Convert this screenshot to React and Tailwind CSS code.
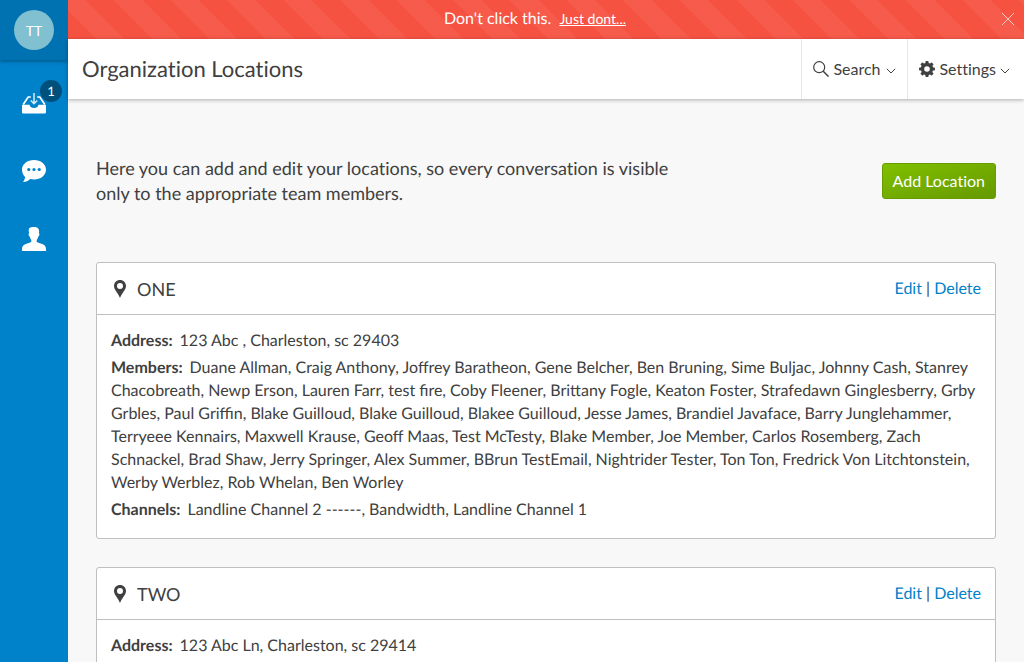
import React from "react";

const locations = [
  {
    name: "ONE",
    address: "123 Abc , Charleston, sc 29403",
    members:
      "Duane Allman, Craig Anthony, Joffrey Baratheon, Gene Belcher, Ben Bruning, Sime Buljac, Johnny Cash, Stanrey Chacobreath, Newp Erson, Lauren Farr, test fire, Coby Fleener, Brittany Fogle, Keaton Foster, Strafedawn Ginglesberry, Grby Grbles, Paul Griffin, Blake Guilloud, Blake Guilloud, Blakee Guilloud, Jesse James, Brandiel Javaface, Barry Junglehammer, Terryeee Kennairs, Maxwell Krause, Geoff Maas, Test McTesty, Blake Member, Joe Member, Carlos Rosemberg, Zach Schnackel, Brad Shaw, Jerry Springer, Alex Summer, BBrun TestEmail, Nightrider Tester, Ton Ton, Fredrick Von Litchtonstein, Werby Werblez, Rob Whelan, Ben Worley",
    channels: "Landline Channel 2 ------, Bandwidth, Landline Channel 1",
  },
  { name: "TWO", address: "123 Abc Ln, Charleston, sc 29414" },
];

function InboxIcon() {
  return (
    <svg className="h-6 w-6" viewBox="0 0 24 24" fill="none" aria-hidden="true">
      <path d="M.8 13.700h6.700c.6 2.300 2 3.300 4.500 3.300s3.900-1 4.500-3.300h6.700a.8.8 0 0 1 .8.800v6.700a1.300 1.300 0 0 1-1.300 1.300H1.300A1.300 1.300 0 0 1 0 21.200v-6.700a.8.8 0 0 1 .8-.8z" fill="#fff" />
      <path d="M1.200 13.500 6.200 6h2.600M22.800 13.500 17.800 6h-2.600" stroke="#fff" strokeWidth="1.700" />
      <path d="M12 2v10.500M8.800 9.500l3.200 3.200 3.200-3.200" stroke="#fff" strokeOpacity=".85" strokeWidth="1.500" />
    </svg>
  );
}

function ChatIcon() {
  return (
    <svg className="h-6 w-6" viewBox="0 0 24 24" aria-hidden="true">
      <path d="M12 1c6.700 0 12 4.200 12 9.700s-5.300 9.800-12 9.800c-1.300 0-2.600-.2-3.800-.5C6.300 21.800 4 23 1 23c1.300-1.500 2-3.200 2.100-5C1.200 16.100 0 13.600 0 10.700 0 5.200 5.300 1 12 1z" fill="#fff" />
      <g fill="#0082ca">
        <circle cx="6.800" cy="10.500" r="1.600" />
        <circle cx="12" cy="10.500" r="1.600" />
        <circle cx="17.200" cy="10.500" r="1.600" />
      </g>
    </svg>
  );
}

function PersonIcon() {
  return (
    <svg className="h-6 w-6" viewBox="0 0 24 24" fill="#fff" aria-hidden="true">
      <path d="M7.200 1.200C8.500.2 10.300 0 12 0c2.900 0 5.100 1.200 5.100 4.300 0 .7-.1 1.300-.2 2 .6.200.6 1.200.3 2-.2.700-.5 1.200-.9 1.300-.3 1.500-.9 2.600-1.600 3.500v1.700c1.300 1 3.500 1.400 5.500 2.200 2.300.9 3.800 2.200 3.800 5.200V24H0v-1.800c0-3 1.500-4.300 3.800-5.200 2-.8 4.200-1.200 5.500-2.200v-1.700c-.7-.9-1.300-2-1.600-3.500-.4-.1-.7-.6-.9-1.300-.3-.8-.3-1.800.3-2-.4-2.100-.6-4 .1-5.100z" />
    </svg>
  );
}

function SearchIcon() {
  return (
    <svg className="h-4 w-4" viewBox="0 0 16 16" fill="none" stroke="#404040" aria-hidden="true">
      <circle cx="6.200" cy="6.200" r="5.500" strokeWidth="1.200" />
      <path d="m10.200 10.200 5.400 5.400" strokeWidth="1.500" />
    </svg>
  );
}

const teeth = [0, 45, 90, 135, 180, 225, 270, 315];

function GearIcon() {
  return (
    <svg className="h-4 w-4" viewBox="0 0 16 16" fill="#404040" aria-hidden="true">
      <circle cx="8" cy="8" r="4.500" fill="none" stroke="#404040" strokeWidth="3.400" />
      {teeth.map((a) => (
        <path key={a} d="M6.400 3V.800Q6.400 0 7.200 0h1.600q.8 0 .8.800V3z" transform={`rotate(${a} 8 8)`} />
      ))}
    </svg>
  );
}

function Chevron() {
  return (
    <svg className="mt-1 h-2 w-2.5" viewBox="0 0 10 8" fill="none" stroke="#404040" aria-hidden="true">
      <path d="M.8 1.800 5 6l4.200-4.200" />
    </svg>
  );
}

function PinIcon() {
  return (
    <svg className="h-[18px] w-3" viewBox="0 0 12 18" fill="#404040" aria-hidden="true">
      <path fillRule="evenodd" d="M6 0c3.400 0 6 2.600 6 6 0 3.600-3.700 6.600-6 12C3.700 12.600 0 9.600 0 6c0-3.400 2.600-6 6-6zm0 3a3 3 0 1 0 0 6 3 3 0 0 0 0-6z" />
    </svg>
  );
}

function Field({ label, children }) {
  return (
    <div className="leading-[23px] [font-variant-ligatures:normal]">
      <dt className="mr-[7px] inline font-bold">{label}:</dt>
      <dd className="inline">{children}</dd>
    </div>
  );
}

function LocationCard({ location }) {
  return (
    <section className="rounded-[3px] border border-[#bfbfbf] bg-white">
      <header className="flex h-[52px] items-center border-b border-[#bfbfbf] pr-3.5 pl-[17px]">
        <PinIcon />
        <h2 className="ml-[11px] flex-1 text-lg">{location.name}</h2>
        <div>
          <a href="#edit" className="text-[#0082ca]">Edit</a> |{" "}
          <a href="#delete" className="text-[#0082ca]">Delete</a>
        </div>
      </header>
      <dl className="flex flex-col gap-1 px-3.5 pt-3.5 pb-[17px]">
        <Field label="Address">{location.address}</Field>
        {location.members && <Field label="Members">{location.members}</Field>}
        {location.channels && <Field label="Channels">{location.channels}</Field>}
      </dl>
    </section>
  );
}

export default function App() {
  return (
    <div className="flex h-screen overflow-hidden bg-[#f8f8f8] font-[Lato,sans-serif] text-base text-[#404040] antialiased [font-variant-ligatures:none] [text-rendering:geometricPrecision]">
      <nav className="flex w-[68px] shrink-0 flex-col items-center bg-[#0082ca]" aria-label="Main">
        <div className="flex h-[60px] w-full items-center justify-center bg-[#0072b1] shadow-[0_1px_4px_rgba(0,0,0,0.4)]">
          <button className="h-10 w-10 rounded-full bg-[#80c0d0] pt-0.5 text-sm text-white">TT</button>
        </div>
        <div className="flex flex-col gap-11 pt-[31px]">
          <a href="#inbox" className="relative" aria-label="Inbox">
            <InboxIcon />
            <span className="absolute -top-[11px] left-[18px] flex h-[22px] w-[22px] items-center justify-center rounded-full bg-[#00507c] pt-px text-[13px] text-white">1</span>
          </a>
          <a href="#conversations" aria-label="Conversations"><ChatIcon /></a>
          <a href="#contacts" aria-label="Contacts"><PersonIcon /></a>
        </div>
      </nav>

      <div className="flex min-w-0 flex-1 flex-col">
        <div className="flex h-[39px] shrink-0 items-center bg-[#f55242] bg-[repeating-linear-gradient(45deg,transparent_0_20px,rgba(255,255,255,0.05)_20px_40px)] pb-px text-white">
          <p className="flex-1 text-center">
            Don&apos;t click this. <a href="#details" className="ml-1 text-sm underline">Just dont...</a>
          </p>
          <button className="mr-2.5" aria-label="Dismiss">
            <svg className="h-3 w-3" viewBox="0 0 12 12" stroke="#fff" strokeOpacity=".7" aria-hidden="true">
              <path d="m0 0 12 12M12 0 0 12" />
            </svg>
          </button>
        </div>

        <header className="z-10 flex h-[60px] shrink-0 items-stretch bg-white shadow-[0_1px_4px_rgba(0,0,0,0.3)]">
          <h1 className="flex flex-1 items-center pb-0.5 pl-3.5 text-[22px]">Organization Locations</h1>
          <button className="flex items-center gap-1 border-l border-[#e8e8e8] px-[11px]">
            <SearchIcon /> <span className="pr-0.5">Search</span> <Chevron />
          </button>
          <button className="flex items-center gap-1 border-l border-[#e8e8e8] pr-3.5 pl-[11px]">
            <GearIcon /> Settings <Chevron />
          </button>
        </header>

        <main className="min-h-0 flex-1 overflow-hidden px-7 pt-[57px]">
          <div className="mb-14 flex items-start justify-between">
            <p className="max-w-[600px] text-lg leading-[25px]">
              Here you can add and edit your locations, so every conversation is visible only to the appropriate team members.
            </p>
            <button className="mt-[7px] h-9 rounded-[3px] border border-[#669c00] bg-linear-to-br from-[#80c000] to-[#669900] px-2.5 text-white">
              Add Location
            </button>
          </div>
          <div className="flex flex-col gap-7">
            {locations.map((l) => (
              <LocationCard key={l.name} location={l} />
            ))}
          </div>
        </main>
      </div>
    </div>
  );
}
